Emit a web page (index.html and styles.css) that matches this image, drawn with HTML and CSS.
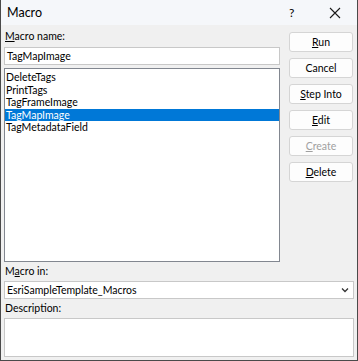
FILE: index.html
```html
<!DOCTYPE html>
<html>
  <head>
    <title>Macro</title>
    <meta charset="utf-8">
    <link rel="stylesheet" href="styles.css">
  </head>
  <body>
    <div class="window">
      <div class="titlebar">
        <span class="title">Macro</span>
        <span class="help">?</span>
        <span class="close">
          <svg width="12" height="12" viewBox="0 0 12 12"><path d="M1 1L11 11M11 1L1 11" stroke="#1a1a1a" stroke-width="1.1" fill="none"/></svg>
        </span>
      </div>
      <div class="content">
        <div class="top">
          <div class="left">
            <div class="label"><u>M</u>acro name:</div>
            <div class="field">TagMapImage</div>
            <div class="list">
              <div class="item">DeleteTags</div>
              <div class="item">PrintTags</div>
              <div class="item">TagFrameImage</div>
              <div class="item selected">TagMapImage</div>
              <div class="item">TagMetadataField</div>
            </div>
          </div>
          <div class="buttons">
            <div class="btn"><u>R</u>un</div>
            <div class="btn">Cancel</div>
            <div class="btn"><u>S</u>tep Into</div>
            <div class="btn"><u>E</u>dit</div>
            <div class="btn disabled"><u>C</u>reate</div>
            <div class="btn"><u>D</u>elete</div>
          </div>
        </div>
        <div class="label low">M<u>a</u>cro in:</div>
        <div class="field select">
          <span>EsriSampleTemplate_Macros</span>
          <svg width="8" height="6" viewBox="0 0 8 6"><path d="M1 1.5L4 4.5L7 1.5" stroke="#333" stroke-width="1.3" fill="none"/></svg>
        </div>
        <div class="label low">Description:</div>
        <div class="desc"></div>
      </div>
    </div>
  </body>
</html>
```

FILE: styles.css
```css
body {
  margin: 0;
  font-family: Lato, "Noto Sans", sans-serif;
  font-size: 10.5px;
  color: #000;
}
.window {
  width: 358px;
  height: 361px;
  box-sizing: border-box;
  border: 1px solid #4a4a4a;
  border-top: none;
  background: #f0f0f0;
  display: flex;
  flex-direction: column;
}
.titlebar {
  height: 25px;
  background: #f5f7fa;
  display: flex;
  align-items: center;
  padding-left: 6px;
}
.title {
  font-size: 12.5px;
  flex: 1;
}
.help {
  font-size: 12px;
  width: 40px;
}
.close {
  width: 28px;
  display: flex;
  align-items: center;
}
.content {
  flex: 1;
  padding: 0 3px 3px 3px;
  display: flex;
  flex-direction: column;
}
.top {
  display: flex;
  gap: 9px;
}
.left {
  width: 276px;
  display: flex;
  flex-direction: column;
}
.label {
  height: 15px;
  line-height: 15px;
  padding: 4px 0 3px 1px;
}
.label.low {
  padding: 2px 0 2px 1px;
}
.field {
  height: 16px;
  line-height: 16px;
  background: #fff;
  border: 1px solid #c8c8c8;
  padding-left: 2px;
}
.list {
  margin-top: 3px;
  height: 190px;
  background: #fff;
  border: 1px solid #828790;
  padding-top: 2px;
}
.item {
  height: 12.6px;
  line-height: 12.6px;
  padding-left: 1px;
}
.selected {
  background: #0078d7;
  color: #fff;
}
.buttons {
  display: flex;
  flex-direction: column;
  gap: 6px;
  padding-top: 7px;
  width: 64px;
}
.btn {
  height: 18px;
  line-height: 18px;
  text-align: center;
  background: #fdfdfd;
  border: 1px solid #d5d5d5;
  border-radius: 3px;
}
.disabled {
  color: #a0a0a0;
}
.select {
  display: flex;
  align-items: center;
  justify-content: space-between;
  padding-right: 4px;
}
.desc {
  flex: 1;
  background: #fff;
  border: 1px solid #c8c8c8;
}
```
